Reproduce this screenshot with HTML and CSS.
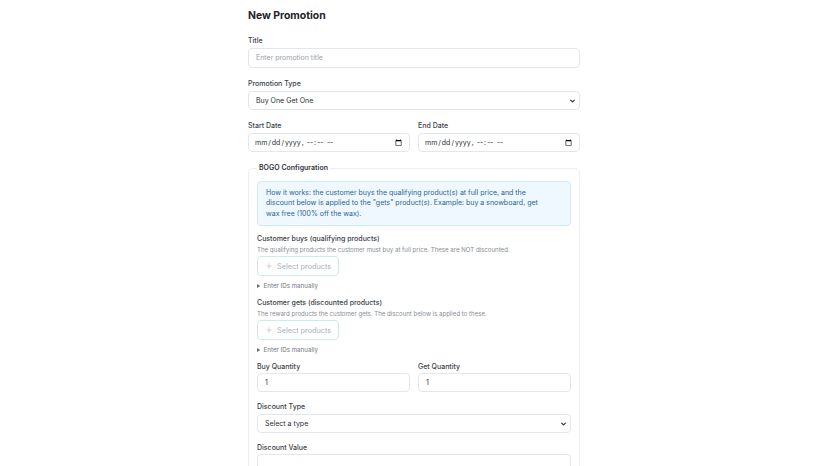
FILE: index.html
```html
<!DOCTYPE html>
<html lang="en">
<head>
<meta charset="utf-8">
<title>New Promotion</title>
<link rel="stylesheet" href="styles.css">
</head>
<body>
<main class="page">
  <h1 class="page-title">New Promotion</h1>
  <form class="promo-form">
    <div class="field">
      <label class="label" for="title">Title</label>
      <input class="input input-lg" id="title" type="text" placeholder="Enter promotion title">
    </div>
    <div class="field">
      <label class="label" for="ptype">Promotion Type</label>
      <div class="select-wrap">
        <select class="input select" id="ptype">
          <option>Buy One Get One</option>
        </select>
        <svg class="chevron" viewBox="0 0 8 6" width="5" height="4"><path d="M1 1.5l3 3 3-3" stroke="currentColor" stroke-width="1.8" fill="none" stroke-linecap="round" stroke-linejoin="round"/></svg>
      </div>
    </div>
    <div class="field row">
      <div class="col">
        <label class="label" for="start">Start Date</label>
        <input class="input date" id="start" type="datetime-local">
      </div>
      <div class="col">
        <label class="label" for="end">End Date</label>
        <input class="input date" id="end" type="datetime-local">
      </div>
    </div>

    <fieldset class="config">
      <legend class="legend">BOGO Configuration</legend>
      <div class="info">How it works: the customer buys the qualifying product(s) at full price, and the discount below is applied to the "gets" product(s). Example: buy a snowboard, get wax free (100% off the wax).</div>

      <div class="group">
        <div class="label">Customer buys (qualifying products)</div>
        <p class="hint">The qualifying products the customer must buy at full price. These are NOT discounted.</p>
        <button type="button" class="picker" disabled>
          <svg class="plus" viewBox="0 0 10 10" width="6" height="6"><path d="M5 0.5v9M0.5 5h9" stroke="currentColor" stroke-width="1.1" fill="none"/></svg>
          Select products
        </button>
        <details class="manual"><summary>Enter IDs manually</summary></details>
      </div>

      <div class="group">
        <div class="label">Customer gets (discounted products)</div>
        <p class="hint">The reward products the customer gets. The discount below is applied to these.</p>
        <button type="button" class="picker" disabled>
          <svg class="plus" viewBox="0 0 10 10" width="6" height="6"><path d="M5 0.5v9M0.5 5h9" stroke="currentColor" stroke-width="1.1" fill="none"/></svg>
          Select products
        </button>
        <details class="manual"><summary>Enter IDs manually</summary></details>
      </div>

      <div class="field field-tight row">
        <div class="col">
          <label class="label" for="buyq">Buy Quantity</label>
          <input class="input" id="buyq" type="number" value="1">
        </div>
        <div class="col">
          <label class="label" for="getq">Get Quantity</label>
          <input class="input" id="getq" type="number" value="1">
        </div>
      </div>
      <div class="field field-tight">
        <label class="label" for="dtype">Discount Type</label>
        <div class="select-wrap">
          <select class="input select" id="dtype">
            <option>Select a type</option>
          </select>
          <svg class="chevron" viewBox="0 0 8 6" width="5" height="4"><path d="M1 1.5l3 3 3-3" stroke="currentColor" stroke-width="1.8" fill="none" stroke-linecap="round" stroke-linejoin="round"/></svg>
        </div>
      </div>
      <div class="field field-tight">
        <label class="label" for="dval">Discount Value</label>
        <input class="input" id="dval" type="number">
      </div>
    </fieldset>
  </form>
</main>
</body>
</html>
```

FILE: styles.css
```css
* { box-sizing: border-box; }

html, body {
  margin: 0;
  background: #ffffff;
}

body {
  font-family: Inter, "Noto Sans", sans-serif;
  color: #2b2f36;
  font-size: 7px;
  line-height: 1.5;
}

.page {
  width: 332px;
  margin: 0 auto;
  padding-top: 8px;
}

.page-title {
  margin: 0 0 13px;
  font-size: 10.4px;
  line-height: 15px;
  font-weight: 700;
  color: #1f2329;
}

.field {
  margin-bottom: 11.5px;
}

.field-tight {
  margin-bottom: 10px;
}

.label {
  display: block;
  font-size: 7px;
  line-height: 10.5px;
  font-weight: 500;
  color: #393e46;
  margin-bottom: 1px;
}

.input {
  display: block;
  width: 100%;
  height: 19px;
  padding: 0 7px;
  font-family: inherit;
  font-size: 7px;
  color: #2b2f36;
  background: #ffffff;
  border: 1px solid #e3e6ea;
  border-radius: 4px;
  outline: none;
}

.input-lg {
  height: 20px;
}

.input::placeholder {
  color: #9aa1ab;
}

.select-wrap {
  position: relative;
}

.select {
  appearance: none;
  -webkit-appearance: none;
  padding: 0 7px;
}

/* dropdown caret drawn over the right end of the select */
.chevron {
  position: absolute;
  right: 5px;
  top: 8px;
  color: #2b2f36;
  pointer-events: none;
}

.date {
  padding: 0 5px;
}

.row {
  display: flex;
  gap: 8px;
}

.col {
  flex: 1;
  min-width: 0;
}

.config {
  margin: 0;
  padding: 7px 8px 8px;
  border: 1px solid #eceef1;
  border-radius: 5px;
}

.legend {
  padding: 0 2px;
  font-size: 7px;
  line-height: 10.5px;
  font-weight: 600;
  color: #2f343b;
}

.info {
  padding: 6px 18px 5.5px 8px;
  background: #f0f8ff;
  border: 1px solid #cfe8fb;
  border-radius: 4px;
  color: #2a6497;
  font-size: 7px;
  line-height: 10.5px;
  margin-bottom: 8px;
}

.group {
  margin-bottom: 8px;
}

.group .label {
  margin-bottom: 0.5px;
}

.hint {
  margin: 0 0 2.5px;
  font-size: 6.1px;
  line-height: 9px;
  color: #868d96;
}

.picker {
  display: flex;
  align-items: center;
  gap: 5px;
  height: 20px;
  padding: 0 7px 0 8px;
  font-family: inherit;
  font-size: 7.3px;
  color: #a4b1bd;
  background: #ffffff;
  border: 1px solid #c9efdf;
  border-radius: 4px;
}

.plus {
  color: #b5c0ca;
}

.manual {
  margin-top: 4.5px;
  font-size: 6.2px;
  line-height: 9px;
  color: #6f7680;
}

.manual summary {
  cursor: pointer;
}
```
